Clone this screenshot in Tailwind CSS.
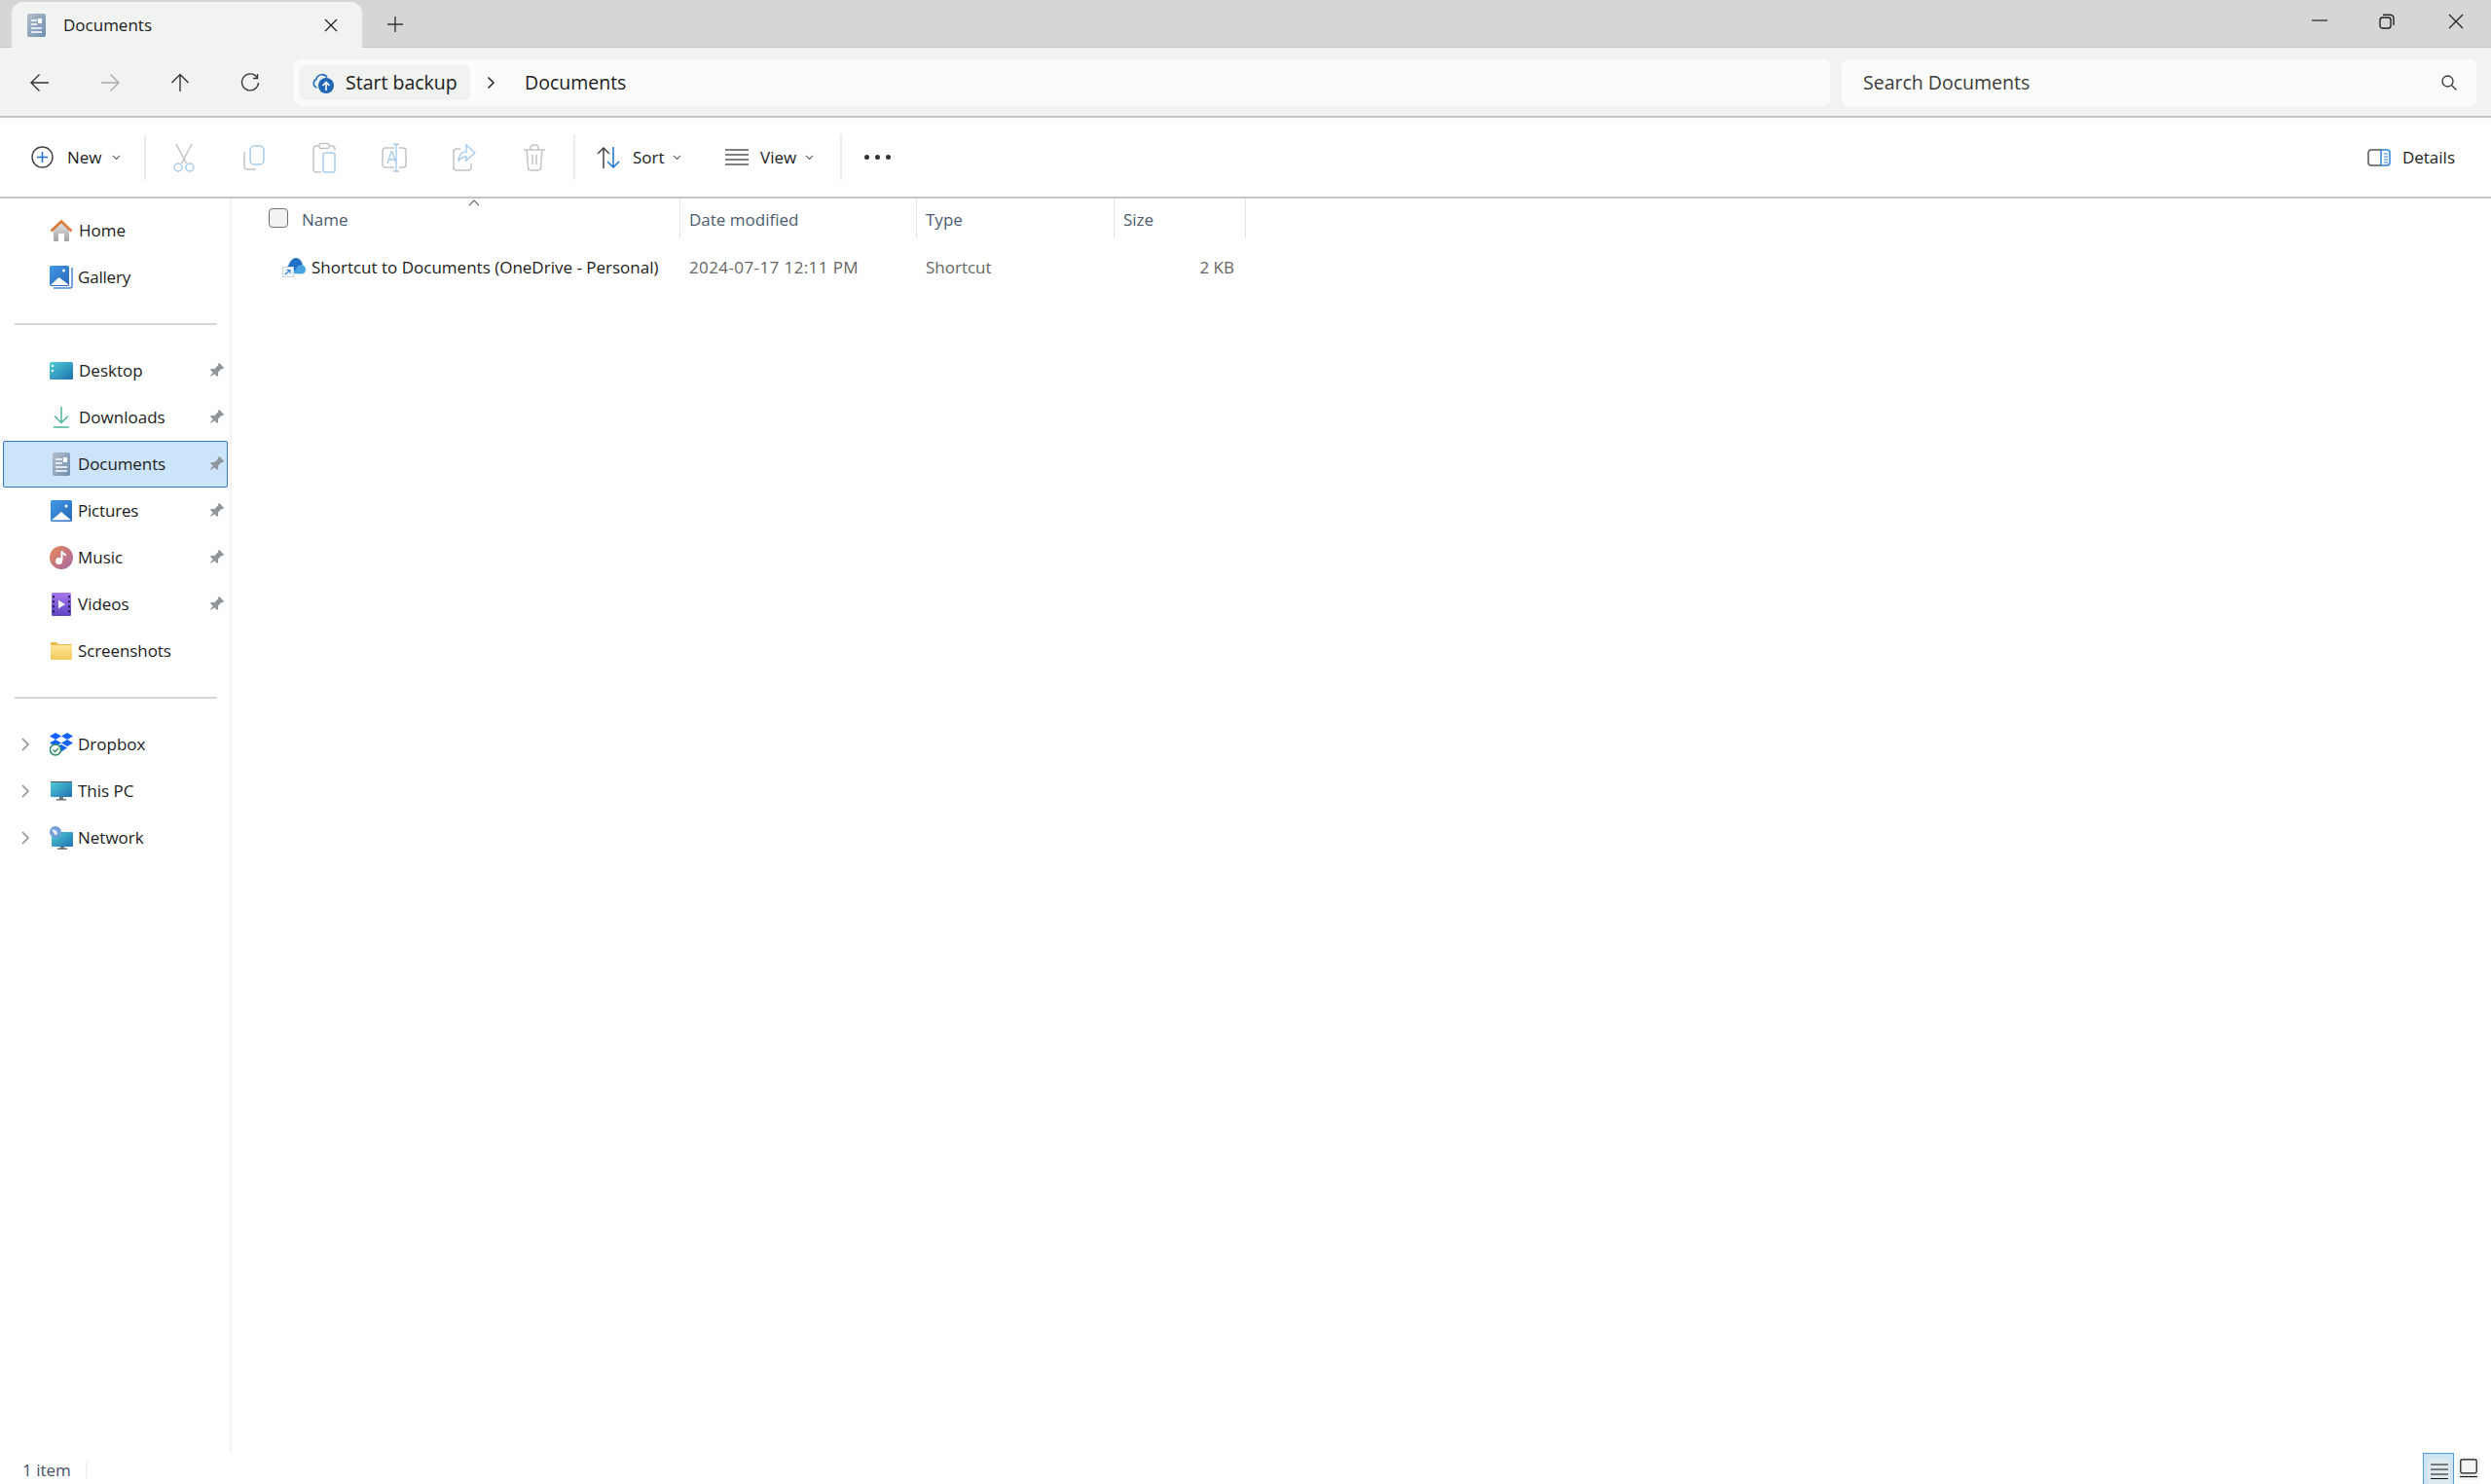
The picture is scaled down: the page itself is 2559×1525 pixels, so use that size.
<!DOCTYPE html>
<html lang="en">
<head>
<meta charset="UTF-8">
<title>Documents - File Explorer</title>
<script src="https://cdn.jsdelivr.net/npm/@tailwindcss/browser@4"></script>
</head>
<body class="w-[2559px] h-[1525px] overflow-hidden flex flex-col bg-white text-[#1b1b1b] font-['Open_Sans',sans-serif] text-[17px]">

<svg width="0" height="0" class="absolute">
  <defs>
    <linearGradient id="blue" x1="0" y1="0" x2="1" y2="1"><stop offset="0" stop-color="#3f9ae6"/><stop offset="1" stop-color="#2a66b8"/></linearGradient>
    <linearGradient id="doc" x1="0" y1="0" x2="1" y2="1"><stop offset="0" stop-color="#b3bdc8"/><stop offset="1" stop-color="#6f8fb2"/></linearGradient>
    <linearGradient id="screen" x1="0" y1="0" x2="1" y2="1"><stop offset="0" stop-color="#4fd0d6"/><stop offset="1" stop-color="#1f6fb0"/></linearGradient>
    <linearGradient id="music" x1="0" y1="0" x2="1" y2="1"><stop offset="0" stop-color="#e98a54"/><stop offset="1" stop-color="#a566a8"/></linearGradient>
    <linearGradient id="video" x1="0" y1="0" x2="0" y2="1"><stop offset="0" stop-color="#a978ec"/><stop offset="1" stop-color="#5b43c4"/></linearGradient>
    <linearGradient id="folder" x1="0" y1="0" x2="0" y2="1"><stop offset="0" stop-color="#fde79a"/><stop offset="1" stop-color="#f5c85a"/></linearGradient>
    <linearGradient id="house" x1="0" y1="0" x2="0" y2="1"><stop offset="0" stop-color="#e2e2e2"/><stop offset="1" stop-color="#a3a3a3"/></linearGradient>
    <symbol id="pin" viewBox="0 0 16 16" overflow="visible"><path transform="rotate(45 8 8)" fill="#8f979c" d="M4.500 0h7v2l-1 .5v5l2.500 2.500v1.500H9l-.6 4.500h-.8L7 11.500H3V10l2.500-2.500v-5l-1-.5z"/></symbol>
  </defs>
</svg>

<!-- tab strip -->
<div class="h-[49px] shrink-0 flex bg-[#d5d7d4] border-b border-[#c8c9c7] pl-3">
  <div class="w-[360px] h-[47px] mt-[2px] flex items-center bg-[#f1f3f1] rounded-t-xl pl-4 pr-[25px]">
    <svg width="19" height="24" viewBox="0 0 19 24"><rect width="19" height="24" rx="2" fill="url(#doc)"/><path d="M4 7h6M4 11h6M4 15h11M4 19h11" stroke="#fff" stroke-width="1.4"/><rect x="11" y="5" width="4" height="5" fill="#fff"/></svg>
    <span class="ml-[18px] font-medium">Documents</span>
    <svg class="ml-auto" width="14" height="14" viewBox="0 0 14 14"><path d="M1 1l12 12M13 1L1 13" stroke="#222" stroke-width="1.3"/></svg>
  </div>
  <svg class="ml-[26px] mt-[17px]" width="16" height="16" viewBox="0 0 16 16"><path d="M8 0v16M0 8h16" stroke="#333" stroke-width="1.4"/></svg>
  <div class="ml-auto flex items-start pt-[14px] pr-7">
    <svg class="mt-[6px]" width="16" height="2" viewBox="0 0 16 2"><path d="M0 1h16" stroke="#222" stroke-width="1.2"/></svg>
    <svg class="ml-[53px]" width="16" height="16" viewBox="0 0 16 16" fill="none" stroke="#222" stroke-width="1.4"><rect x="1" y="4" width="11" height="11" rx="2.5"/><path d="M4 1.2h7.5A3.5 3.5 0 0 1 15 4.700V12"/></svg>
    <svg class="ml-[55px]" width="16" height="16" viewBox="0 0 16 16"><path d="M1 1l14 14M15 1L1 15" stroke="#222" stroke-width="1.3"/></svg>
  </div>
</div>

<!-- nav bar -->
<div class="h-[72px] shrink-0 flex items-center bg-[#f1f3f1] border-b-2 border-[#c4c5c4] pt-[2px] pl-[5px] pr-[15px]">
  <div class="w-[72px] flex justify-center"><svg width="20" height="20" viewBox="0 0 20 20" fill="none" stroke="#333" stroke-width="1.4"><path d="M19 10H1.500M9.500 1.500L1 10l8.500 8.500"/></svg></div>
  <div class="w-[72px] flex justify-center"><svg width="20" height="20" viewBox="0 0 20 20" fill="none" stroke="#aaa" stroke-width="1.4"><path d="M1 10h17.500M10.500 1.500L19 10l-8.500 8.500"/></svg></div>
  <div class="w-[71px] flex justify-center"><svg width="20" height="20" viewBox="0 0 20 20" fill="none" stroke="#333" stroke-width="1.4"><path d="M10 19V1.500M1.500 10L10 1.500l8.500 8.500"/></svg></div>
  <div class="w-[73px] flex justify-center"><svg width="20" height="20" viewBox="0 0 20 20" fill="none" stroke="#333" stroke-width="1.4"><path d="M17 4.500A8.500 8.500 0 1 0 18.500 10"/><path d="M17.500 1v4.500H13"/></svg></div>
  <div class="ml-[9px] flex-1 h-[48px] flex items-center bg-[#fbfbfb] rounded-lg pl-[5px] text-[19px]">
    <div class="h-[36px] w-[176px] flex items-center bg-[#f1f3f1] rounded-md pl-[13px]">
      <svg width="24" height="24" viewBox="0 0 24 24"><path d="M5.500 17A4.500 4.500 0 0 1 5 8.500 6 6 0 0 1 16 6.500" fill="none" stroke="#2a6fc0" stroke-width="1.600"/><circle cx="15" cy="15" r="8" fill="#1f66b5"/><path d="M15 20v-8M11.500 15l3.500-3.500 3.500 3.500" fill="none" stroke="#fff" stroke-width="1.600"/></svg>
      <span class="ml-[11px] whitespace-nowrap text-[19.500px]">Start backup</span>
    </div>
    <svg class="ml-[17px]" width="9" height="14" viewBox="0 0 9 14" fill="none" stroke="#222" stroke-width="1.500"><path d="M1.500 1.500L7 7l-5.500 5.500"/></svg>
    <span class="ml-[30px] text-[19.500px]">Documents</span>
  </div>
  <div class="ml-[12px] w-[652px] h-[49px] flex items-center bg-[#fbfbfb] rounded-lg pl-[22px] pr-[20px] text-[#3b3b3b] text-[19.500px]">
    <span>Search Documents</span>
    <svg class="ml-auto" width="16" height="16" viewBox="0 0 16 16" fill="none" stroke="#333" stroke-width="1.300"><circle cx="6.500" cy="6.500" r="5.500"/><path d="M10.500 10.500L15.500 15.500"/></svg>
  </div>
</div>

<!-- command bar -->
<div class="h-[83px] shrink-0 flex items-center bg-white border-b-2 border-[#c4c5c4]">
  <div class="w-[148px] flex items-center pl-8">
    <svg width="23" height="23" viewBox="0 0 23 23"><circle cx="11.500" cy="11.500" r="10.500" fill="none" stroke="#444" stroke-width="1.400"/><path d="M11.500 6v11M6 11.500h11" stroke="#1f72cf" stroke-width="1.500"/></svg>
    <span class="ml-[14px]">New</span>
    <svg class="ml-[10px]" width="9" height="6" viewBox="0 0 9 6" fill="none" stroke="#666" stroke-width="1.100"><path d="M1 1l3.500 3.500L8 1"/></svg>
  </div>
  <div class="w-[2px] h-[47px] bg-[#ececec]"></div>
  <div class="ml-[3px] w-[72px] flex justify-center">
    <svg width="22" height="30" viewBox="0 0 22 30" fill="none"><path d="M3 1l10.500 20M19 1L8.500 21" stroke="#bdbdbd" stroke-width="1.300"/><circle cx="5" cy="25" r="4" stroke="#a9cdea" stroke-width="1.500"/><circle cx="17" cy="25" r="4" stroke="#a9cdea" stroke-width="1.500"/></svg>
  </div>
  <div class="w-[72px] flex justify-center">
    <svg width="22" height="26" viewBox="0 0 22 26" fill="none"><path d="M2 7.500A2 2 0 0 0 1 9v13a3 3 0 0 0 3 3h9" stroke="#c4c4c4" stroke-width="1.500"/><rect x="7" y="1" width="14" height="19" rx="4" stroke="#a9cdea" stroke-width="1.500"/></svg>
  </div>
  <div class="w-[72px] flex justify-center">
    <svg width="24" height="32" viewBox="0 0 24 32" fill="none"><path d="M6 4H4a3 3 0 0 0-3 3v21a3 3 0 0 0 3 3h5M18 4h2a3 3 0 0 1 3 3v2" stroke="#c4c4c4" stroke-width="1.500"/><rect x="7" y="1.500" width="10" height="5" rx="1.500" stroke="#c4c4c4" stroke-width="1.500"/><rect x="11" y="11" width="12" height="20" rx="2.500" stroke="#a9cdea" stroke-width="1.500"/></svg>
  </div>
  <div class="w-[72px] flex justify-center">
    <svg width="26" height="30" viewBox="0 0 26 30" fill="none"><path d="M13 5H4a3 3 0 0 0-3 3v14a3 3 0 0 0 3 3h9M18 5h4a3 3 0 0 1 3 3v14a3 3 0 0 1-3 3h-4" stroke="#c4c4c4" stroke-width="1.500"/><path d="M12 1h6M15 1v28M12 29h6M6 21l4-12h1l4 12M7.500 17h6" stroke="#a9cdea" stroke-width="1.400"/></svg>
  </div>
  <div class="w-[72px] flex justify-center">
    <svg width="24" height="28" viewBox="0 0 24 28" fill="none"><path d="M8 5H4a3 3 0 0 0-3 3v16a3 3 0 0 0 3 3h12a3 3 0 0 0 3-3v-4" stroke="#c4c4c4" stroke-width="1.500"/><path d="M14 1l9 8-9 8v-4c-4 0-6.500 1.500-8 5 0-6 3-10 8-10z" stroke="#a9cdea" stroke-width="1.500"/></svg>
  </div>
  <div class="w-[72px] flex justify-center">
    <svg width="22" height="28" viewBox="0 0 22 28" fill="none" stroke="#c4c4c4" stroke-width="1.500"><path d="M0 6h22M7 6V4a3 3 0 0 1 3-3h2a3 3 0 0 1 3 3v2M3 6l1.500 18a3 3 0 0 0 3 3h7a3 3 0 0 0 3-3L19 6M9 11v10M13 11v10"/></svg>
  </div>
  <div class="ml-[4px] w-[2px] h-[47px] bg-[#ececec]"></div>
  <div class="w-[132px] flex items-center pl-[22px]">
    <svg width="25" height="24" viewBox="0 0 25 24" fill="none" stroke-width="1.500"><path d="M7 23V2M1 8l6-6 6 6" stroke="#444"/><path d="M17 1v21M11 16l6 6 6-6" stroke="#1f72cf"/></svg>
    <span class="ml-3">Sort</span>
    <svg class="ml-[8px]" width="9" height="6" viewBox="0 0 9 6" fill="none" stroke="#666" stroke-width="1.100"><path d="M1 1l3.500 3.500L8 1"/></svg>
  </div>
  <div class="w-[140px] flex items-center pl-[22px]">
    <svg width="24" height="18" viewBox="0 0 24 18" stroke="#555" stroke-width="1.300"><path d="M0 1h24M0 6h24M0 11h24M0 16h24"/></svg>
    <span class="ml-3">View</span>
    <svg class="ml-[9px]" width="9" height="6" viewBox="0 0 9 6" fill="none" stroke="#666" stroke-width="1.100"><path d="M1 1l3.500 3.500L8 1"/></svg>
  </div>
  <div class="w-[2px] h-[47px] bg-[#ececec]"></div>
  <div class="ml-[23px] flex gap-[6px]"><span class="size-[5px] rounded-full bg-[#333]"></span><span class="size-[5px] rounded-full bg-[#333]"></span><span class="size-[5px] rounded-full bg-[#333]"></span></div>
  <div class="ml-auto pr-[37px] flex items-center">
    <svg width="24" height="18" viewBox="0 0 24 18" fill="none"><path d="M14 1H4a3 3 0 0 0-3 3v10a3 3 0 0 0 3 3h10" stroke="#555" stroke-width="1.500"/><path d="M14 1h6a3 3 0 0 1 3 3v10a3 3 0 0 1-3 3h-6z" stroke="#2f7fd6" stroke-width="1.500"/><path d="M17 5h4M17 8h4M17 11h4M17 14h4" stroke="#2f7fd6" stroke-width="1.200"/></svg>
    <span class="ml-3">Details</span>
  </div>
</div>

<!-- main -->
<div class="flex-1 flex min-h-0">
  <nav class="w-[238px] shrink-0 border-r-2 border-[#f3f3f3] pt-[9px]">
    <div class="h-[48px] flex items-center pl-[51px]">
      <svg width="24" height="24" viewBox="0 0 24 24"><path d="M4 11L12 4l8 7v11a1 1 0 0 1-1 1h-4v-8H9v8H5a1 1 0 0 1-1-1z" fill="url(#house)"/><path d="M1.500 12.500L12 2.500l10.500 10" fill="none" stroke="#dc7b38" stroke-width="2.600"/></svg>
      <span class="ml-[6px]">Home</span>
    </div>
    <div class="h-[48px] flex items-center pl-[51px]">
      <svg width="24" height="24" viewBox="0 0 24 24"><path d="M23 2v19a2 2 0 0 1-2 2H4" fill="none" stroke="#4a88d2" stroke-width="1.500"/><rect x="0" y="0" width="20" height="21" rx="1.500" fill="url(#blue)"/><path d="M1 20l8.500-8 9.500 7v1z" fill="#fff"/><circle cx="14.500" cy="5" r="1.500" fill="#fff"/></svg>
      <span class="ml-[5px] tracking-[-.2px]">Gallery</span>
    </div>
    <div class="h-[48px] flex items-center pl-[15px]"><div class="w-[208px] h-[2px] bg-[#d6d6d6]"></div></div>
    <div class="h-[48px] flex items-center pl-[51px] pr-[6px]">
      <svg width="24" height="18" viewBox="0 0 24 18"><rect width="24" height="18" rx="1.500" fill="url(#screen)"/><rect x="2" y="3" width="2" height="2" fill="#fff"/><rect x="2" y="8" width="2" height="2" fill="#fff"/></svg>
      <span class="ml-[6px]">Desktop</span>
      <svg class="ml-auto" width="16" height="16"><use href="#pin"/></svg>
    </div>
    <div class="h-[48px] flex items-center pl-[55px] pr-[6px]">
      <svg width="16" height="22" viewBox="0 0 16 22" fill="none" stroke="#4fb496" stroke-width="1.500"><path d="M8 0v16M1 9.500l7 7 7-7M0 21h16"/></svg>
      <span class="ml-[10px]">Downloads</span>
      <svg class="ml-auto" width="16" height="16"><use href="#pin"/></svg>
    </div>
    <div class="h-[48px] w-[231px] ml-[3px] flex items-center pl-[50px] pr-[3px] bg-[#cce4f9] border border-[#3478c5] rounded-[2px]">
      <svg width="18" height="24" viewBox="0 0 18 24"><rect width="18" height="24" rx="2" fill="url(#doc)"/><path d="M3 7h7M3 11h7M3 15h12M3 19h12" stroke="#fff" stroke-width="1.300"/><rect x="11" y="5" width="4" height="5" fill="#fff"/></svg>
      <span class="ml-[8px] tracking-[-.1px]">Documents</span>
      <svg class="ml-auto" width="16" height="16"><use href="#pin"/></svg>
    </div>
    <div class="h-[48px] flex items-center pl-[52px] pr-[6px]">
      <svg width="22" height="22" viewBox="0 0 22 22"><rect width="22" height="22" rx="1.500" fill="url(#blue)"/><path d="M1 20.500l10-8.500 10 8.500z" fill="#fff"/><circle cx="16" cy="6" r="1.500" fill="#fff"/></svg>
      <span class="ml-[6px] tracking-[-.2px]">Pictures</span>
      <svg class="ml-auto" width="16" height="16"><use href="#pin"/></svg>
    </div>
    <div class="h-[48px] flex items-center pl-[51px] pr-[6px]">
      <svg width="24" height="24" viewBox="0 0 24 24"><circle cx="12" cy="12" r="12" fill="url(#music)"/><path d="M12.500 5v10" stroke="#fff" stroke-width="2"/><circle cx="9.500" cy="15.500" r="3.500" fill="#fff"/><path d="M12.500 4.500c1 2.500 3 2.500 4.500 4v2.500c-1.500-2-3.500-2-4.500-3z" fill="#fff"/></svg>
      <span class="ml-[5px]">Music</span>
      <svg class="ml-auto" width="16" height="16"><use href="#pin"/></svg>
    </div>
    <div class="h-[48px] flex items-center pl-[53px] pr-[6px]">
      <svg width="20" height="24" viewBox="0 0 20 24"><rect width="20" height="24" rx="1.500" fill="url(#video)"/><path d="M1 3h2v2.500H1zM1 8h2v2.500H1zM1 13h2v2.500H1zM1 18h2v2.500H1zM17 3h2v2.500h-2zM17 8h2v2.500h-2zM17 13h2v2.500h-2zM17 18h2v2.500h-2z" fill="#2c2460"/><path d="M7 7.500l7 4.500-7 4.500z" fill="#f1f1f8"/></svg>
      <span class="ml-[7px]">Videos</span>
      <svg class="ml-auto" width="16" height="16"><use href="#pin"/></svg>
    </div>
    <div class="h-[48px] flex items-center pl-[52px]">
      <svg width="22" height="18" viewBox="0 0 22 18"><path d="M0 1a1 1 0 0 1 1-1h5l2 2h13a1 1 0 0 1 1 1v4H0z" fill="#eeb84a"/><path d="M0 3h22v14a1 1 0 0 1-1 1H1a1 1 0 0 1-1-1z" fill="url(#folder)"/></svg>
      <span class="ml-[6px] tracking-[-.1px]">Screenshots</span>
    </div>
    <div class="h-[48px] flex items-center pl-[15px]"><div class="w-[208px] h-[2px] bg-[#d6d6d6]"></div></div>
    <div class="h-[48px] flex items-center pl-[22px]">
      <svg width="8" height="14" viewBox="0 0 8 14" fill="none" stroke="#8a8a8a" stroke-width="1.500"><path d="M1 1l6 6-6 6"/></svg>
      <svg class="ml-[21px]" width="24" height="24" viewBox="0 0 24 24"><path d="M6 0l6 3.500L6 7 0 3.500zM18 0l6 3.500L18 7l-6-3.500zM6 7l6 3.500L6 14l-6-3.500zM18 7l6 3.500-6 3.500-6-3.500zM12 12l6 3.500-6 4-6-4z" fill="#0f62fe"/><circle cx="6" cy="17.500" r="5.500" fill="#fff" stroke="#2f8f63" stroke-width="1.500"/><path d="M3.500 17.500l2 2 3.500-3.500" fill="none" stroke="#2f8f63" stroke-width="1.400"/></svg>
      <span class="ml-[5px]">Dropbox</span>
    </div>
    <div class="h-[48px] flex items-center pl-[22px]">
      <svg width="8" height="14" viewBox="0 0 8 14" fill="none" stroke="#8a8a8a" stroke-width="1.500"><path d="M1 1l6 6-6 6"/></svg>
      <svg class="ml-[22px]" width="22" height="20" viewBox="0 0 22 20"><rect width="22" height="16" rx="1" fill="url(#screen)"/><rect y="0" width="22" height="1" fill="#555"/><path d="M9 16h4v2H9zM6 18h10v1.500H6z" fill="#6c7378"/></svg>
      <span class="ml-[6px]">This PC</span>
    </div>
    <div class="h-[48px] flex items-center pl-[22px]">
      <svg width="8" height="14" viewBox="0 0 8 14" fill="none" stroke="#8a8a8a" stroke-width="1.500"><path d="M1 1l6 6-6 6"/></svg>
      <svg class="ml-[21px]" width="24" height="24" viewBox="0 0 24 24"><rect x="2" y="6" width="22" height="15" rx="1" fill="url(#screen)"/><path d="M11 21h4v1.500h-4zM8 22.500h10V24H8z" fill="#6c7378"/><circle cx="6" cy="6" r="6" fill="#6f9fd8"/><path d="M2 4c2-2 4 0 5 1s2 3 0 4-3-3-5-5z" fill="#dfeaf5"/></svg>
      <span class="ml-[5px]">Network</span>
    </div>
  </nav>

  <section class="flex-1 min-w-0 text-[#1b1b1b]">
    <div class="relative h-[41px] flex text-[#4b5a6e]">
      <svg class="absolute left-[243px] top-px" width="12" height="7" viewBox="0 0 12 7" fill="none" stroke="#666" stroke-width="1.100"><path d="M1 6l5-5 5 5"/></svg>
      <div class="w-[460px] flex items-start pl-[38px] pt-[10px]">
        <div class="size-5 rounded-[4px] border border-[#6f6f6f] bg-[#f1f3f1]"></div>
        <span class="ml-[14px] -mt-[1px]">Name</span>
      </div>
      <div class="w-[243px] border-l border-[#e5e5e5] pl-[9px] pt-[9px]">Date modified</div>
      <div class="w-[203px] border-l border-[#e5e5e5] pl-[9px] pt-[9px]">Type</div>
      <div class="w-[136px] border-x border-[#e5e5e5] pl-[9px] pt-[9px]">Size</div>
    </div>
    <div class="h-[48px] mt-[6px] flex items-center">
      <div class="w-[460px] flex items-center pl-[52px]">
        <svg width="24" height="20" viewBox="0 0 24 20"><path d="M1 15c0-3 2-6 5-6.500C8 3 11 0 14 0c3 0 6 3 7 7l-7 9H1z" fill="#1f6fc4"/><path d="M11 16l5-8c3-1.500 8-.5 8 4 0 3-2 4.500-4 4.500z" fill="#49a2e2"/><rect x=".5" y="9.500" width="11" height="10" fill="#f4f8fc" stroke="#c8d9ea"/><path d="M3 17l5-4.500M4.500 12.500H8V16" fill="none" stroke="#2f7fd6" stroke-width="1.100"/></svg>
        <span class="ml-[6px] whitespace-nowrap">Shortcut to Documents (OneDrive - Personal)</span>
      </div>
      <div class="w-[243px] pl-[10px] text-[#666] tracking-[.4px]">2024-07-17 12:11 PM</div>
      <div class="w-[203px] pl-[10px] text-[#666]">Shortcut</div>
      <div class="w-[136px] pr-[12px] text-right text-[#666]">2 KB</div>
    </div>
  </section>
</div>

<!-- status bar -->
<footer class="h-[32px] shrink-0 flex items-start">
  <div class="w-[90px] h-[17px] mt-[9px] flex items-center pl-[23px] border-r-2 border-[#f3f3f3] text-[#45526a] leading-none whitespace-nowrap">1 item</div>
  <div class="ml-auto mr-[11px] flex items-start gap-[3px]">
    <div class="w-[32px] h-[32px] bg-[#cde4f5] border-x border-t border-[#4a9fdc] pt-[5px] pl-[4px]">
      <div class="w-[23px] h-[26px] bg-[#dfeaee] rounded-[3px] flex items-center justify-center">
        <svg width="18" height="16" viewBox="0 0 18 16" stroke="#111" stroke-width="1.200"><path d="M0 1h18M0 6h18M0 11h18M0 15.500h18"/></svg>
      </div>
    </div>
    <div class="w-[24px] h-[24px] mt-[4px] bg-[#f3f3f3] rounded-[3px] flex items-center justify-center">
      <svg width="18" height="20" viewBox="0 0 18 20" fill="none" stroke="#111" stroke-width="1.200"><rect x=".8" y=".8" width="16.400" height="14" rx="1.500"/><path d="M0 18.500h18"/></svg>
    </div>
  </div>
</footer>

</body>
</html>
